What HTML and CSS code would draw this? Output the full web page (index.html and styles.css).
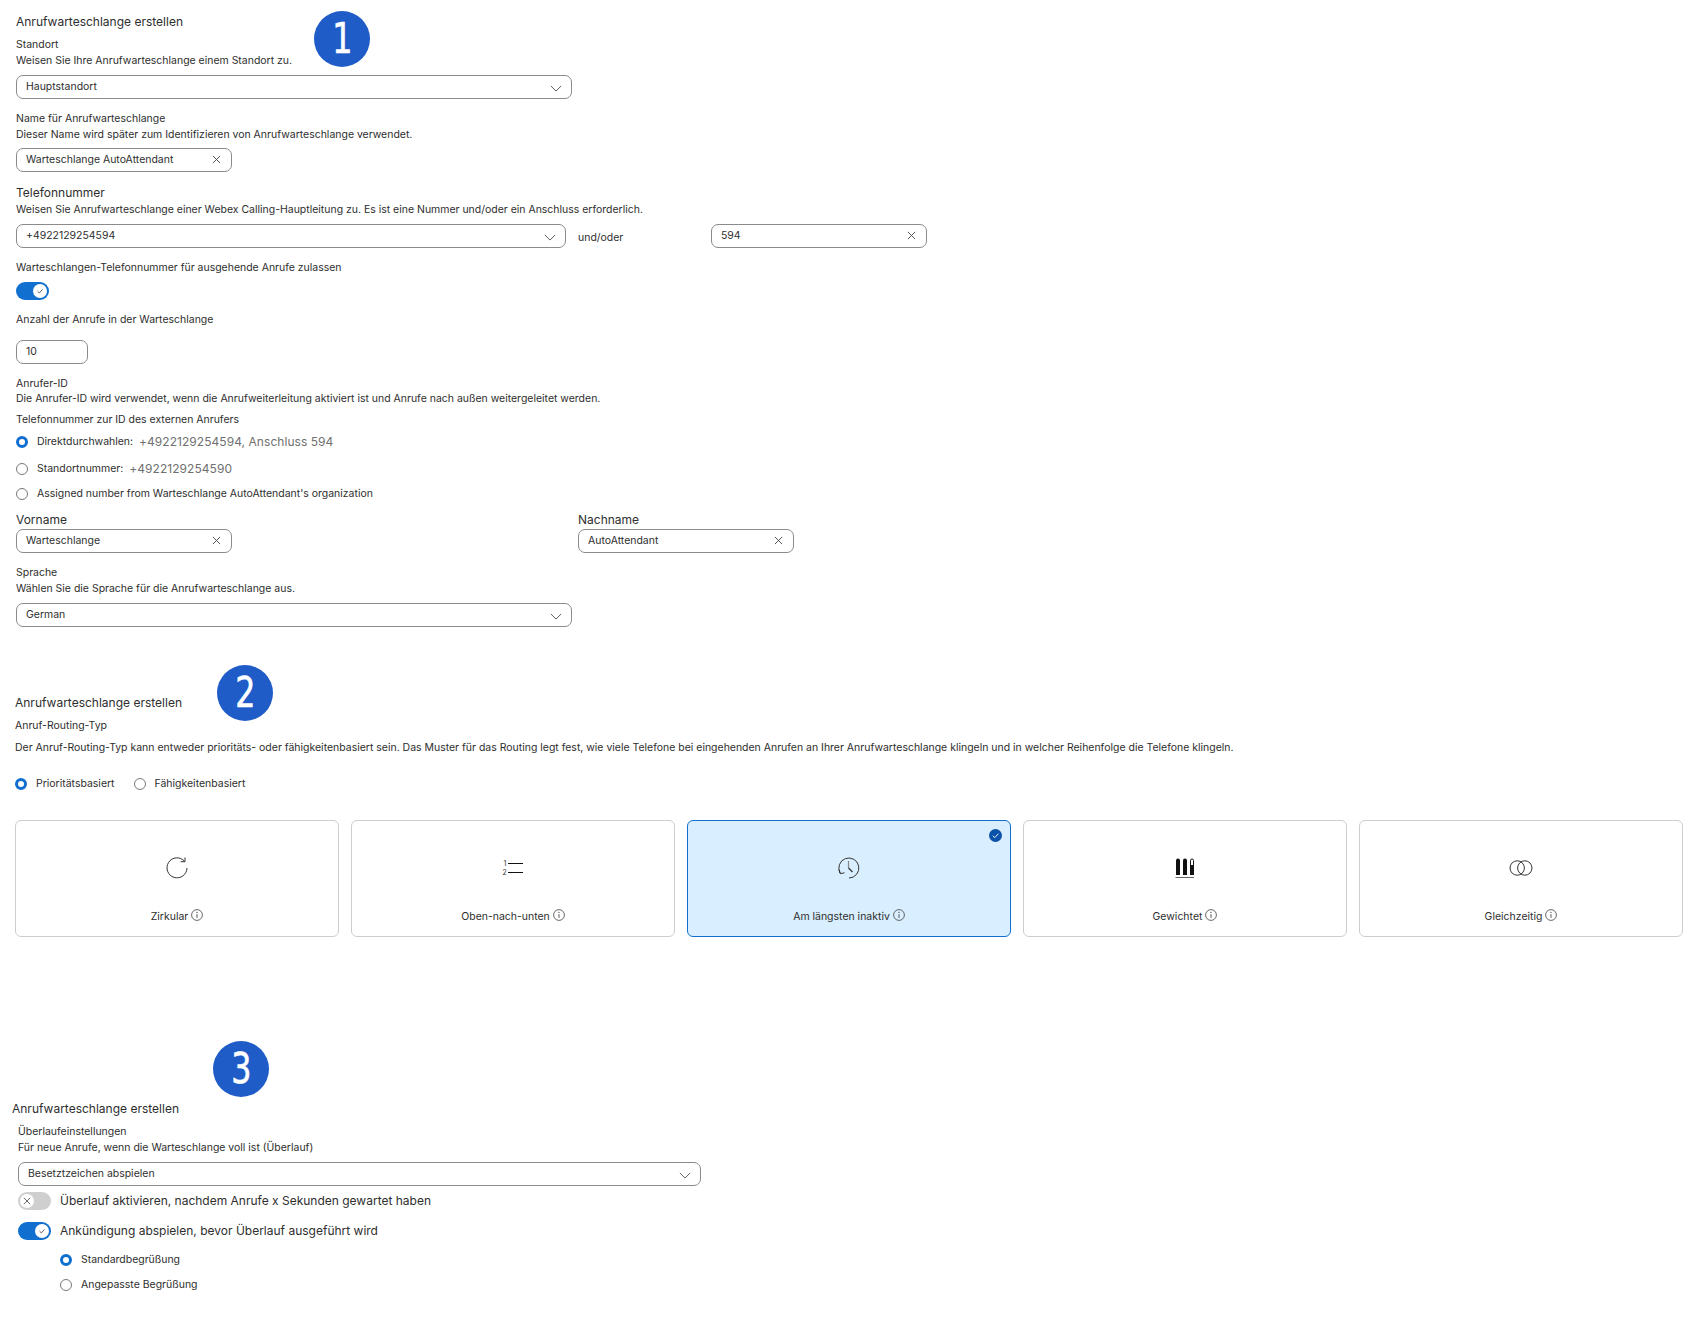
FILE: index.html
```html
<!DOCTYPE html>
<html lang="de">
<head>
<meta charset="utf-8">
<title>Anrufwarteschlange erstellen</title>
<link rel="stylesheet" href="styles.css">
</head>
<body>
<svg class="sprite" width="0" height="0" aria-hidden="true">
  <symbol id="chev" viewBox="0 0 14 8"><path d="M1 1l6 6 6-6" fill="none" stroke="#444" stroke-width="1"/></symbol>
  <symbol id="x" viewBox="0 0 10 10"><path d="M1 1l8 8M9 1l-8 8" fill="none" stroke="#444" stroke-width="1"/></symbol>
  <symbol id="info" viewBox="0 0 12 12"><circle cx="6" cy="6" r="5.4" fill="none" stroke="#444" stroke-width=".8"/><path d="M6 5.2v3.6" stroke="#444" stroke-width=".9"/><circle cx="6" cy="3.4" r=".6" fill="#444"/></symbol>
  <symbol id="tick" viewBox="0 0 10 10"><path d="M2 5.2l2.2 2.2L8.2 3" fill="none" stroke="currentColor" stroke-width="1"/></symbol>
</svg>

<main class="page">
  <section class="sec sec-one">
    <span class="badge badge-one"><span class="digit">1</span></span>
    <h1 class="title">Anrufwarteschlange erstellen</h1>
    <p class="line gap-6">Standort</p>
    <p class="line">Weisen Sie Ihre Anrufwarteschlange einem Standort zu.</p>
    <div class="field w-556 gap-7"><span>Hauptstandort</span><svg class="chev"><use href="#chev"/></svg></div>

    <p class="line gap-11">Name für Anrufwarteschlange</p>
    <p class="line">Dieser Name wird später zum Identifizieren von Anrufwarteschlange verwendet.</p>
    <div class="field w-216 gap-6"><span>Warteschlange AutoAttendant</span><svg class="clear"><use href="#x"/></svg></div>

    <p class="line big gap-13">Telefonnummer</p>
    <p class="line">Weisen Sie Anrufwarteschlange einer Webex Calling-Hauptleitung zu. Es ist eine Nummer und/oder ein Anschluss erforderlich.</p>
    <div class="phone-row gap-7">
      <div class="field w-550"><span>+4922129254594</span><svg class="chev"><use href="#chev"/></svg></div>
      <span class="andor">und/oder</span>
      <div class="field w-216"><span>594</span><svg class="clear"><use href="#x"/></svg></div>
    </div>

    <p class="line gap-11">Warteschlangen-Telefonnummer für ausgehende Anrufe zulassen</p>
    <span class="toggle on gap-7"><span class="knob"><svg class="knob-icon"><use href="#tick"/></svg></span></span>

    <p class="line gap-11">Anzahl der Anrufe in der Warteschlange</p>
    <div class="field w-72 gap-13"><span>10</span></div>

    <p class="line gap-11">Anrufer-ID</p>
    <p class="line pull-1">Die Anrufer-ID wird verwendet, wenn die Anrufweiterleitung aktiviert ist und Anrufe nach außen weitergeleitet werden.</p>
    <p class="line gap-5">Telefonnummer zur ID des externen Anrufers</p>
    <div class="radio-row gap-6"><span class="radio on"></span><span>Direktdurchwahlen:</span><span class="num">+4922129254594, Anschluss 594</span></div>
    <div class="radio-row gap-11"><span class="radio"></span><span>Standortnummer:</span><span class="num">+4922129254590</span></div>
    <div class="radio-row gap-9"><span class="radio"></span><span>Assigned number from Warteschlange AutoAttendant's organization</span></div>

    <div class="name-row gap-11">
      <div class="name-col">
        <p class="line big">Vorname</p>
        <div class="field w-216 gap-1"><span>Warteschlange</span><svg class="clear"><use href="#x"/></svg></div>
      </div>
      <div class="name-col">
        <p class="line big">Nachname</p>
        <div class="field w-216 gap-1"><span>AutoAttendant</span><svg class="clear"><use href="#x"/></svg></div>
      </div>
    </div>

    <p class="line gap-11">Sprache</p>
    <p class="line">Wählen Sie die Sprache für die Anrufwarteschlange aus.</p>
    <div class="field w-556 gap-7"><span>German</span><svg class="chev"><use href="#chev"/></svg></div>
  </section>

  <section class="sec sec-two">
    <span class="badge badge-two"><span class="digit">2</span></span>
    <h1 class="title">Anrufwarteschlange erstellen</h1>
    <p class="line gap-6">Anruf-Routing-Typ</p>
    <p class="line gap-6">Der Anruf-Routing-Typ kann entweder prioritäts- oder fähigkeitenbasiert sein. Das Muster für das Routing legt fest, wie viele Telefone bei eingehenden Anrufen an Ihrer Anrufwarteschlange klingeln und in welcher Reihenfolge die Telefone klingeln.</p>
    <div class="type-row">
      <div class="radio-row"><span class="radio on"></span><span>Prioritätsbasiert</span></div>
      <div class="radio-row"><span class="radio"></span><span>Fähigkeitenbasiert</span></div>
    </div>
    <div class="cards">
      <div class="card">
        <svg class="card-icon" viewBox="0 0 24 24"><path d="M19.5 5.2A10 10 0 1 0 22 12" fill="none" stroke="#333" stroke-width="1"/><path d="M20 1.5v4.2h-4.4" fill="none" stroke="#333" stroke-width="1"/></svg>
        <div class="card-label"><span>Zirkular</span><svg class="info"><use href="#info"/></svg></div>
      </div>
      <div class="card">
        <svg class="card-icon" viewBox="0 0 24 24"><text class="mini" x="2.500" y="9.500">1</text><text class="mini" x="1.500" y="18.500">2</text><path d="M7 7.500h15M7 16.500h15" stroke="#111" stroke-width="1.200"/></svg>
        <div class="card-label"><span>Oben-nach-unten</span><svg class="info"><use href="#info"/></svg></div>
      </div>
      <div class="card selected">
        <span class="check"><svg class="check-icon"><use href="#tick"/></svg></span>
        <svg class="card-icon" viewBox="0 0 24 24"><path d="M3.200 17A10 10 0 1 1 12 22" fill="none" stroke="#333" stroke-width="1"/><path d="M1.800 13.500l1.400 4.200 4.300-.9" fill="none" stroke="#333" stroke-width="1"/><path d="M11.500 5v7" stroke="#888" stroke-width="1.200"/><path d="M11.500 12l4 4" stroke="#333" stroke-width="1.200"/></svg>
        <div class="card-label"><span>Am längsten inaktiv</span><svg class="info"><use href="#info"/></svg></div>
      </div>
      <div class="card">
        <svg class="card-icon" viewBox="0 0 24 24"><path d="M3 4.500a2 2 0 0 1 4 0V19H3zM10 4.500a2 2 0 0 1 4 0V19h-4z" fill="#111"/><path d="M17.500 4.500a1.500 1.500 0 0 1 3 0V18.500h-3z" fill="#fff" stroke="#111"/><path d="M17 9h4v10h-4z" fill="#111"/><path d="M2.500 21.500h18.500" stroke="#666" stroke-width="1"/></svg>
        <div class="card-label"><span>Gewichtet</span><svg class="info"><use href="#info"/></svg></div>
      </div>
      <div class="card">
        <svg class="card-icon" viewBox="0 0 24 24"><circle cx="8.200" cy="12" r="7.200" fill="none" stroke="#333" stroke-width="1"/><circle cx="15.800" cy="12" r="7.200" fill="none" stroke="#333" stroke-width="1"/></svg>
        <div class="card-label"><span>Gleichzeitig</span><svg class="info"><use href="#info"/></svg></div>
      </div>
    </div>
  </section>

  <section class="sec sec-three">
    <span class="badge badge-three"><span class="digit">3</span></span>
    <h1 class="title">Anrufwarteschlange erstellen</h1>
    <div class="overflow">
      <p class="line gap-6">Überlaufeinstellungen</p>
      <p class="line">Für neue Anrufe, wenn die Warteschlange voll ist (Überlauf)</p>
      <div class="field w-683 gap-7"><span>Besetztzeichen abspielen</span><svg class="chev"><use href="#chev"/></svg></div>
      <div class="toggle-row gap-6"><span class="toggle"><span class="knob"><svg class="knob-icon"><use href="#x"/></svg></span></span><span>Überlauf aktivieren, nachdem Anrufe x Sekunden gewartet haben</span></div>
      <div class="toggle-row gap-12"><span class="toggle on"><span class="knob"><svg class="knob-icon"><use href="#tick"/></svg></span></span><span>Ankündigung abspielen, bevor Überlauf ausgeführt wird</span></div>
      <div class="greet">
        <div class="radio-row gap-11"><span class="radio on"></span><span>Standardbegrüßung</span></div>
        <div class="radio-row gap-9"><span class="radio"></span><span>Angepasste Begrüßung</span></div>
      </div>
    </div>
  </section>
</main>
</body>
</html>
```
FILE: styles.css
```css
* { box-sizing: border-box; }
html, body { margin: 0; padding: 0; background: #fff; }
body { font-family: Inter, "Liberation Sans", sans-serif; color: #2e2e2e; font-size: 10.48px; line-height: 16px; width: 1699px; height: 1330px; overflow: hidden; }
.sprite { position: absolute; }
p, h1 { margin: 0; }

.page { display: flex; flex-direction: column; }
.sec { position: relative; display: flex; flex-direction: column; align-items: flex-start; }
.sec-one { padding: 14px 0 0 16px; }
.sec-two { padding: 0 16px 0 15px; margin-top: 68px; }
.sec-three { padding-left: 12px; margin-top: 164px; }

.title { font-size: 12px; font-weight: 400; line-height: 16px; }
.line { white-space: nowrap; height: 16px; padding-top: 1px; }
.big { font-size: 12px; padding-top: 0; }

.gap-1 { margin-top: 1px; }
.gap-5 { margin-top: 5px; }
.gap-6 { margin-top: 6px; }
.gap-7 { margin-top: 7px; }
.gap-8 { margin-top: 8px; }
.gap-9 { margin-top: 9px; }
.gap-11 { margin-top: 11px; }
.gap-12 { margin-top: 12px; }
.gap-13 { margin-top: 13px; }
.pull-1 { margin-top: -1px; }

.badge { position: absolute; width: 56px; height: 56px; border-radius: 50%; background: #1f5cc8; color: #fff; font-family: "DejaVu Sans Condensed", "DejaVu Sans", sans-serif; font-size: 43px; line-height: 54px; text-align: center; }
.digit { display: inline-block; transform: scaleX(.82); -webkit-text-stroke: .6px #fff; }
.badge-one { left: 314px; top: 11px; }
.badge-two { left: 217px; top: -30px; }
.badge-three { left: 213px; top: -60px; }

.field { display: flex; align-items: center; justify-content: space-between; height: 24px; padding: 0 9px; border: 1px solid #8b8b8b; border-radius: 7px; background: #fff; flex: none; }
.w-72 { width: 72px; }
.w-216 { width: 216px; }
.w-550 { width: 550px; }
.w-556 { width: 556px; }
.w-683 { width: 683px; }
.chev { width: 12px; height: 7px; margin-top: 2px; }
.clear { width: 9px; height: 9px; margin-top: -1px; margin-right: 1px; }

.phone-row { display: flex; align-items: flex-start; }
.andor { width: 133px; margin-left: 12px; padding-top: 6px; }
.name-row { display: flex; gap: 346px; }
.name-col { display: flex; flex-direction: column; }

.toggle { display: block; width: 33px; height: 18px; border-radius: 9px; background: #cfcfcf; position: relative; flex: none; }
.toggle.on { background: #1170cf; }
.knob { position: absolute; top: 2px; left: 2px; width: 14px; height: 14px; border-radius: 50%; background: #fff; display: flex; align-items: center; justify-content: center; }
.toggle.on .knob { left: 17px; }
.knob-icon { width: 8px; height: 8px; color: #333; }

.radio-row { display: flex; align-items: center; gap: 9px; height: 16px; padding-top: 1px; }
.radio { width: 12px; height: 12px; border-radius: 50%; border: 1px solid #777; background: #fff; flex: none; }
.radio.on { border: 3.500px solid #0f6fd0; }
.radio-row .num { font-size: 12px; color: #707070; margin-left: -3px; letter-spacing: .05px; }

.type-row { display: flex; gap: 19px; margin-top: 20px; }
.cards { display: flex; gap: 12px; margin-top: 29px; }
.card { position: relative; width: 324px; height: 117px; border: 1px solid #cdcdcd; border-radius: 6px; display: flex; flex-direction: column; align-items: center; padding-top: 35px; background: #fff; }
.card.selected { background: #d9eefe; border-color: #1170cf; }
.card-icon { width: 24px; height: 24px; }
.mini { font-size: 7px; fill: #333; }
.card-label { display: flex; align-items: flex-start; gap: 3px; margin-top: 29px; }
.info { width: 12px; height: 12px; margin-top: 0; }
.check { position: absolute; top: 8px; right: 8px; width: 13px; height: 13px; border-radius: 50%; background: #0b52a8; display: flex; align-items: center; justify-content: center; }
.check-icon { width: 9px; height: 9px; color: #fff; }

.overflow { padding-left: 6px; display: flex; flex-direction: column; align-items: flex-start; }
.toggle-row { display: flex; align-items: center; gap: 9px; font-size: 12px; }
.greet { padding-left: 42px; display: flex; flex-direction: column; }
```
